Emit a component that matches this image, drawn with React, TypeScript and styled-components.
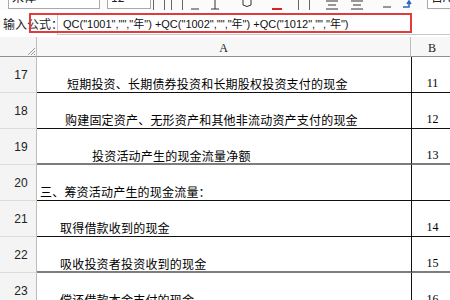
import React from "react";
import styled, { createGlobalStyle } from "styled-components";

const GlobalStyle = createGlobalStyle`
  html, body {
    margin: 0;
    padding: 0;
    background: #fff;
  }
  body {
    font-family: "Noto Sans CJK SC", "Liberation Sans", sans-serif;
    color: #000;
  }
`;

const Page = styled.div`
  width: 450px;
  height: 300px;
  overflow: hidden;
  background: #fff;
`;

// Toolbar (only the bottom edge is visible in the screenshot)
const Toolbar = styled.div`
  height: 10px;
  overflow: hidden;
  display: flex;
  align-items: flex-end;
  padding-left: 8px;
  background: #fbfbfb;
`;

const ComboBox = styled.div<{ $w: number; $ml?: number }>`
  flex: none;
  width: ${({ $w }) => $w}px;
  height: 20px;
  margin-left: ${({ $ml }) => $ml ?? 0}px;
  margin-bottom: 1px;
  box-sizing: border-box;
  border: 1px solid #a9a9a9;
  background: #fff;
  font-size: 12px;
  line-height: 14px;
  padding-left: 3px;
  color: #222;
`;

const ToolIcon = styled.div<{ $ml: number }>`
  flex: none;
  width: 16px;
  height: 16px;
  margin-left: ${({ $ml }) => $ml}px;
  margin-bottom: -3px;
  display: flex;
  align-items: flex-end;
  justify-content: center;
`;

const FormulaBar = styled.div`
  position: relative;
  height: 27px;
  display: flex;
  align-items: center;
  background: #fff;
`;

const FormulaLabel = styled.div`
  flex: none;
  width: 57px;
  padding-left: 3px;
  box-sizing: border-box;
  font-size: 12px;
  color: #222;
  white-space: nowrap;
`;

const FormulaInput = styled.div`
  flex: 1;
  height: 21px;
  margin-top: 1px;
  box-sizing: border-box;
  border-left: 1px solid #c9c9c9;
  border-bottom: 1px solid #c9c9c9;
  padding-left: 5px;
  font-family: "Liberation Sans", "Noto Sans CJK SC", sans-serif;
  font-size: 11px;
  line-height: 20px;
  color: #111;
  white-space: nowrap;
`;

const Highlight = styled.div`
  position: absolute;
  left: 29px;
  top: 3px;
  width: 383px;
  height: 20px;
  box-sizing: border-box;
  border: 2px solid #e23b3b;
  pointer-events: none;
`;

const Sheet = styled.div`
  display: grid;
  grid-template-columns: 37px 374px 42px;
`;

const Corner = styled.div`
  height: 20px;
  box-sizing: border-box;
  background: #f5f5f5;
  border-right: 1px solid #bdbdbd;
  border-bottom: 1px solid #8f8f8f;
  display: flex;
  align-items: flex-end;
  justify-content: flex-end;
`;

const ColHeader = styled.div<{ $last?: boolean }>`
  height: 20px;
  box-sizing: border-box;
  background: #f7f7f7;
  border-right: ${({ $last }) => ($last ? "none" : "1px solid #bdbdbd")};
  border-bottom: 1px solid #8f8f8f;
  display: flex;
  align-items: center;
  justify-content: center;
  font-family: "Liberation Serif", serif;
  font-size: 12px;
  color: #222;
  padding-top: 3px;
`;

const RowNum = styled.div`
  height: 36px;
  box-sizing: border-box;
  background: #f4f4f4;
  border-right: 1px solid #bdbdbd;
  border-bottom: 1px solid #dcdcdc;
  display: flex;
  align-items: center;
  justify-content: center;
  padding-left: 6px;
  font-family: "Liberation Sans", sans-serif;
  font-size: 12px;
  color: #222;
`;

const Cell = styled.div<{ $heavy?: boolean; $indent?: number; $num?: boolean }>`
  height: 36px;
  box-sizing: border-box;
  border-bottom: ${({ $heavy }) => ($heavy ? "2px solid #7d7d7d" : "1px solid #111")};
  display: flex;
  align-items: flex-end;
  padding-left: ${({ $indent }) => $indent ?? 0}px;
  padding-bottom: ${({ $heavy }) => ($heavy ? 0 : 1)}px;
  font-size: 12px;
  line-height: 15px;
  letter-spacing: 0.2px;
  white-space: nowrap;
  overflow: hidden;
  ${({ $num }) =>
    $num
      ? `
    justify-content: center;
    border-left: 1px solid #111;
    font-family: "Liberation Serif", serif;
    letter-spacing: 0;
  `
      : ""}
`;

const rows = [
  { n: 17, text: "短期投资、长期债券投资和长期股权投资支付的现金", indent: 30, b: "11" },
  { n: 18, text: "购建固定资产、无形资产和其他非流动资产支付的现金", indent: 28, b: "12" },
  { n: 19, text: "投资活动产生的现金流量净额", indent: 55, b: "13", heavy: true },
  { n: 20, text: "三、筹资活动产生的现金流量：", indent: 3, b: "" },
  { n: 21, text: "取得借款收到的现金", indent: 23, b: "14" },
  { n: 22, text: "吸收投资者投资收到的现金", indent: 23, b: "15", heavy: true },
  { n: 23, text: "偿还借款本金支付的现金", indent: 23, b: "16" },
];

const Hatch = () => (
  <svg width="10" height="10" viewBox="0 0 10 10">
    <path d="M9 2 L2 9 M9 5 L5 9 M9 8 L8 9" stroke="#9a9a9a" strokeWidth="1" />
  </svg>
);

const Lines = () => (
  <svg width="14" height="16" viewBox="0 0 14 16">
    <path d="M1 4 H13 M3 8 H11 M1 12 H13" stroke="#333" />
  </svg>
);

const Square = () => (
  <svg width="14" height="16" viewBox="0 0 14 16">
    <rect x="1.5" y="2.5" width="11" height="11" stroke="#666" fill="none" />
  </svg>
);

const App: React.FC = () => (
  <Page>
    <GlobalStyle />
    <Toolbar>
      <ComboBox $w={92}>宋体</ComboBox>
      <ComboBox $w={44} $ml={7}>12</ComboBox>
      <ToolIcon $ml={0}>
        <Square />
      </ToolIcon>
      <ToolIcon $ml={2}>
        <Square />
      </ToolIcon>
      <ToolIcon $ml={2}>
        <svg width="14" height="16" viewBox="0 0 14 16">
          <path d="M3 12 H11" stroke="#333" />
        </svg>
      </ToolIcon>
      <ToolIcon $ml={4}>
        <svg width="14" height="16" viewBox="0 0 14 16">
          <path d="M7 3 V12 M3 12 H11" stroke="#333" />
        </svg>
      </ToolIcon>
      <ToolIcon $ml={16}>
        <svg width="12" height="16" viewBox="0 0 12 16">
          <path d="M2 2 V8 Q6 11 10 8 V2" stroke="#333" fill="none" />
          <path d="M2 14 H10" stroke="#333" />
        </svg>
      </ToolIcon>
      <ToolIcon $ml={14}>
        <svg width="14" height="16" viewBox="0 0 14 16">
          <rect x="2" y="11" width="10" height="3" fill="#e02020" />
        </svg>
      </ToolIcon>
      <ToolIcon $ml={11}>
        <Square />
      </ToolIcon>
      <ToolIcon $ml={12}>
        <Lines />
      </ToolIcon>
      <ToolIcon $ml={9}>
        <Lines />
      </ToolIcon>
      <ToolIcon $ml={14}>
        <svg width="14" height="16" viewBox="0 0 14 16">
          <path d="M3 10 H11" stroke="#333" />
        </svg>
      </ToolIcon>
      <ToolIcon $ml={4}>
        <svg width="14" height="16" viewBox="0 0 14 16">
          <path d="M3 10 H9 V4 M7 7 L9 4 L11 7" stroke="#2b63c6" fill="none" strokeWidth="1.5" />
        </svg>
      </ToolIcon>
      <ComboBox $w={30} $ml={12}>日A</ComboBox>
    </Toolbar>

    <FormulaBar>
      <FormulaLabel>输入公式：</FormulaLabel>
      <FormulaInput>
        QC("1001","","年") +QC("1002","","年") +QC("1012","","年")
      </FormulaInput>
      <Highlight />
    </FormulaBar>

    <Sheet>
      <Corner>
        <Hatch />
      </Corner>
      <ColHeader>A</ColHeader>
      <ColHeader $last>B</ColHeader>
      {rows.map((r) => (
        <React.Fragment key={r.n}>
          <RowNum>{r.n}</RowNum>
          <Cell $heavy={r.heavy} $indent={r.indent}>
            {r.text}
          </Cell>
          <Cell $heavy={r.heavy} $num>
            {r.b}
          </Cell>
        </React.Fragment>
      ))}
    </Sheet>
  </Page>
);

export default App;
